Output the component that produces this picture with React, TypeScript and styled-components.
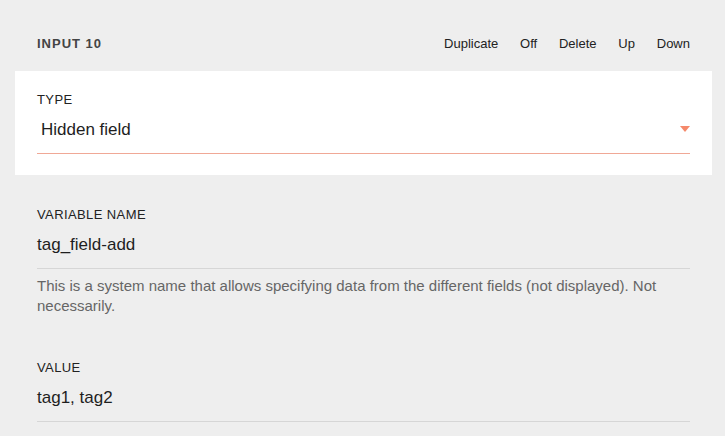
import React from "react";
import styled, { createGlobalStyle } from "styled-components";

const GlobalStyle = createGlobalStyle`
  html, body {
    margin: 0;
    padding: 0;
    background: #eeeeee;
  }
  body {
    font-family: "Liberation Sans", Arial, Helvetica, sans-serif;
    color: #222222;
  }
`;

const Page = styled.div`
  padding: 0 13px 24px 15px;
  background: #eeeeee;
`;

const Header = styled.div`
  display: flex;
  align-items: center;
  justify-content: space-between;
  padding: 35px 22px 19px;
  line-height: 17px;
`;

const Title = styled.div`
  font-size: 13px;
  font-weight: 700;
  letter-spacing: 1px;
  color: #444444;
`;

const Actions = styled.div`
  display: flex;
  gap: 21.8px;
`;

const Action = styled.span`
  font-size: 13px;
  color: #222222;
  cursor: pointer;
`;

const Panel = styled.div<{ $white?: boolean }>`
  background: ${(p) => (p.$white ? "#ffffff" : "transparent")};
  padding: ${(p) => (p.$white ? "21px 22px 21px" : "32px 22px 0")};
`;

const Label = styled.div`
  font-size: 13px;
  line-height: 16px;
  letter-spacing: 0.4px;
  color: #222222;
  text-transform: uppercase;
`;

const FieldBox = styled.div<{ $accent?: boolean }>`
  display: flex;
  align-items: center;
  justify-content: space-between;
  margin-top: 10px;
  padding-bottom: 11px;
  border-bottom: 1px solid ${(p) => (p.$accent ? "#f0a896" : "#d6d6d6")};
`;

const FieldText = styled.div<{ $indent?: boolean }>`
  font-size: 17px;
  line-height: 24px;
  color: #1e1e1e;
  padding-left: ${(p) => (p.$indent ? "4px" : "0")};
`;

const Caret = styled.span`
  width: 0;
  height: 0;
  border-left: 5px solid transparent;
  border-right: 5px solid transparent;
  border-top: 6px solid #f5896b;
  margin-bottom: 3px;
`;

const Help = styled.p`
  margin: 7px 0 12px;
  font-size: 15px;
  line-height: 20px;
  color: #666666;
`;

export default function App() {
  return (
    <>
      <GlobalStyle />
      <Page>
        <Header>
          <Title>INPUT 10</Title>
          <Actions>
            <Action>Duplicate</Action>
            <Action>Off</Action>
            <Action>Delete</Action>
            <Action>Up</Action>
            <Action>Down</Action>
          </Actions>
        </Header>
        <Panel $white>
          <Label>Type</Label>
          <FieldBox $accent>
            <FieldText $indent>Hidden field</FieldText>
            <Caret />
          </FieldBox>
        </Panel>
        <Panel>
          <Label>Variable name</Label>
          <FieldBox>
            <FieldText>tag_field-add</FieldText>
          </FieldBox>
          <Help>
            This is a system name that allows specifying data from the
            different fields (not displayed). Not necessarily.
          </Help>
        </Panel>
        <Panel>
          <Label>Value</Label>
          <FieldBox>
            <FieldText>tag1, tag2</FieldText>
          </FieldBox>
        </Panel>
      </Page>
    </>
  );
}
